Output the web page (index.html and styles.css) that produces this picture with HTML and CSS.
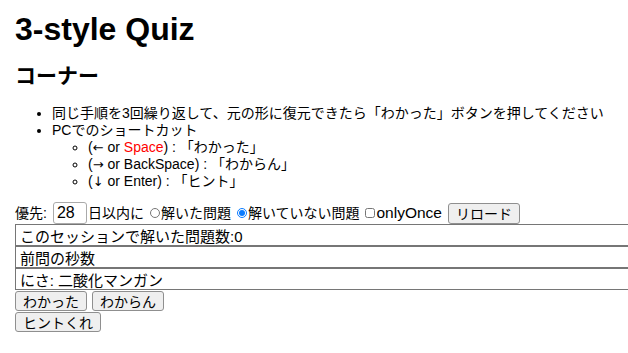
FILE: index.html
```html
<!DOCTYPE html>
<html lang="ja">
  <head>
    <meta charset="UTF-8" />
    <meta name="viewport" content="width=device-width, initial-scale=1.0" />
    <title>3-style Quiz</title>
    <link rel="stylesheet" href="styles.css">
  </head>
  <body>

    <h1>3-style Quiz</h1>
    <h2>コーナー</h2>

    <ul class="help">
      <li>同じ手順を3回繰り返して、元の形に復元できたら「わかった」ボタンを押してください</li>
      <li>PCでのショートカット
        <ul>
          <li>(<span class="arrow">←</span> or <span class="key">Space</span>) : 「わかった」</li>
          <li>(<span class="arrow">→</span> or BackSpace) : 「わからん」</li>
          <li>(<span class="arrow">↓</span> or Enter) : 「ヒント」</li>
        </ul>
      </li>
    </ul>

    <div class="settings">
      <span>優先:</span>
      <input type="text" class="days" value="28">
      <span class="after-days">日以内に</span>
      <label><input type="radio" name="mode">解いた問題</label>
      <label><input type="radio" name="mode" checked>解いていない問題</label>
      <label><input type="checkbox"><span class="latin">onlyOnce</span></label>
      <button>リロード</button>
    </div>

    <div class="info">
      <input type="text" readonly value="このセッションで解いた問題数:0">
      <input type="text" readonly value="前問の秒数">
      <input type="text" readonly value="にさ: 二酸化マンガン">
    </div>

    <div class="actions">
      <div class="row">
        <button>わかった</button>
        <button>わからん</button>
      </div>
      <div class="row">
        <button>ヒントくれ</button>
      </div>
    </div>

  </body>
</html>
```

FILE: styles.css
```css
html{
  overflow-x: hidden;
}

body{
  margin: 0;
  padding: 11px 0 0 15px;
  font-family: "Liberation Sans", "Noto Sans CJK JP", sans-serif;
  font-size: 14px;
  color: #000;
}

h1{
  margin: 0;
  font-size: 32px;
  line-height: 37px;
}

h2{
  margin: 15px 0 0;
  font-size: 21px;
  line-height: 25px;
}

.help{
  margin: 17px 0 0;
  padding-left: 37px;
  line-height: 17px;
}

.help ul{
  margin: 0;
  padding-left: 36px;
  list-style-type: circle;
}

.arrow{
  font-family: "DejaVu Sans", sans-serif;
  font-size: 13px;
}

.key{
  color: red;
}

.settings{
  margin-top: 12px;
  height: 22px;
  line-height: 22px;
  display: flex;
  align-items: center;
  gap: 6px;
  white-space: nowrap;
}

.settings .after-days{
  margin-left: -5px;
}

.settings label{
  display: flex;
  align-items: center;
}

.settings input[type="radio"],
.settings input[type="checkbox"]{
  margin: 0 1px 0 0;
  width: 10px;
  height: 10px;
  accent-color: #0a7cff;
}

.latin{
  font-size: 15.5px;
}

.days{
  box-sizing: border-box;
  width: 34px;
  height: 22px;
  margin: 0;
  padding: 0 3px;
  font: 16px "Liberation Sans", sans-serif;
  border: 1px solid #aaa;
  border-radius: 3px;
}

button{
  box-sizing: border-box;
  height: 20px;
  margin: 0;
  padding: 0 7px;
  font: 14px "Noto Sans CJK JP", sans-serif;
  line-height: 17px;
  color: #000;
  background: #efefef;
  border: 1px solid #8f8f8f;
  border-radius: 3px;
}

.settings button{
  height: 21px;
}

.info{
  display: flex;
  flex-direction: column;
}

.info input{
  box-sizing: border-box;
  width: 640px;
  height: 22px;
  margin: 0;
  padding: 0 4px;
  font: 15px "Liberation Sans", "Noto Sans CJK JP", sans-serif;
  color: #000;
  border: 1px solid #767676;
  outline: none;
}

.actions{
  margin-top: 1px;
  display: flex;
  flex-direction: column;
  gap: 1px;
}

.row{
  display: flex;
  gap: 5px;
}
```
